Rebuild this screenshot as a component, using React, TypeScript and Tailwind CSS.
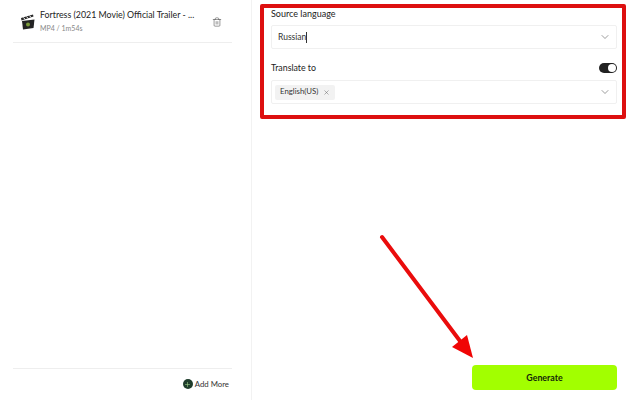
import React from "react";
import { ChevronDown, X, Trash2, Plus } from "lucide-react";

function Clapper() {
  return (
    <svg width="14" height="16" viewBox="0 0 14 16" className="shrink-0">
      <path d="M0.5 6.5 L12.5 2.5 L12 0.5 L0 4 Z" fill="#2a2a2a" />
      <path d="M2.5 3.5 L4 5.4 M5.5 2.6 L7 4.4 M8.5 1.6 L10 3.4" stroke="#fff" strokeWidth="1" />
      <path d="M1 7 L13.5 5.5 L12.5 14 L2 15.5 Z" fill="#232323" />
      <circle cx="7" cy="10.5" r="2" fill="#7a9a3a" />
    </svg>
  );
}

function Select({ children }: { children: React.ReactNode }) {
  return (
    <div className="flex items-center justify-between h-[24px] border border-[#f0f0f0] rounded-[2px] pl-[3px] pr-[5px]">
      {children}
      <ChevronDown size={12} strokeWidth={1.3} color="#666" />
    </div>
  );
}

export default function App() {
  return (
    <div className="relative flex w-[629px] h-[400px] bg-white overflow-hidden text-[#333] font-['Lato',sans-serif]">
      <div className="flex flex-col w-[252px] shrink-0 border-r border-[#f2f2f2] pl-[13px] pr-[19px]">
        <div className="flex items-center h-[43px] border-b border-[#eeeeee] pl-[8px] pr-[10px] pt-[1px]">
          <Clapper />
          <div className="ml-[5px] flex-1 min-w-0">
            <div className="text-[8.8px] leading-[12px] text-[#222] whitespace-nowrap">Fortress (2021 Movie) Official Trailer - ...</div>
            <div className="text-[7px] leading-[12px] mt-[1px] text-[#888]">MP4 / 1m54s</div>
          </div>
          <Trash2 size={10} strokeWidth={1.3} color="#444" />
        </div>
        <div className="flex-1" />
        <div className="flex items-start justify-end h-[32px] border-t border-[#eeeeee] pt-[9px] pr-[3px]">
          <div className="flex items-center gap-[2px]">
            <span className="flex items-center justify-center w-[10px] h-[10px] rounded-full bg-[#1f3d2c]">
              <Plus size={7} strokeWidth={2} color="#9fd08a" />
            </span>
            <span className="text-[7.8px] leading-[12px] text-[#333]">Add More</span>
          </div>
        </div>
      </div>

      <div className="flex flex-col flex-1 pl-[19px] pr-[12px]">
        <div className="text-[9px] leading-[12px] h-[12px] mt-[8px] text-[#222]">Source language</div>
        <div className="mt-[5px]">
          <Select>
            <span className="text-[8.5px] pl-[3px] text-[#333] border-r border-[#333] leading-[11px]">Russian</span>
          </Select>
        </div>
        <div className="flex items-center justify-between mt-[13px] h-[12px]">
          <span className="text-[8.8px] leading-[12px] text-[#222]">Translate to</span>
          <span className="flex items-center justify-end w-[18px] h-[10px] rounded-full bg-[#222] pr-[1px]">
            <span className="w-[8px] h-[8px] rounded-full bg-white" />
          </span>
        </div>
        <div className="mt-[6px]">
          <Select>
            <span className="flex items-center gap-[5px] h-[15px] rounded-[2px] bg-[#f2f2f2] pl-[5px] pr-[5px] text-[7.8px] text-[#333]">
              English(US)
              <X size={7} strokeWidth={1.5} color="#555" />
            </span>
          </Select>
        </div>
        <div className="flex-1" />
        <div className="flex justify-end mb-[10px]">
          <button className="w-[145px] h-[25px] rounded-[4px] bg-[#a2ff00] text-[8.8px] font-bold text-[#14260a]">Generate</button>
        </div>
      </div>

      <div className="absolute left-[260px] top-[4px] w-[366px] h-[115px] border-[4px] border-[#dd1010] rounded-[2px] pointer-events-none" />
      <svg className="absolute left-[370px] top-[228px] pointer-events-none" width="110" height="140" viewBox="0 0 110 140">
        <path d="M12 9 L90 113" stroke="#ea0c0c" strokeWidth="4" strokeLinecap="round" />
        <path d="M103 130 L82 119 L97 107 Z" fill="#f00505" />
      </svg>
    </div>
  );
}
